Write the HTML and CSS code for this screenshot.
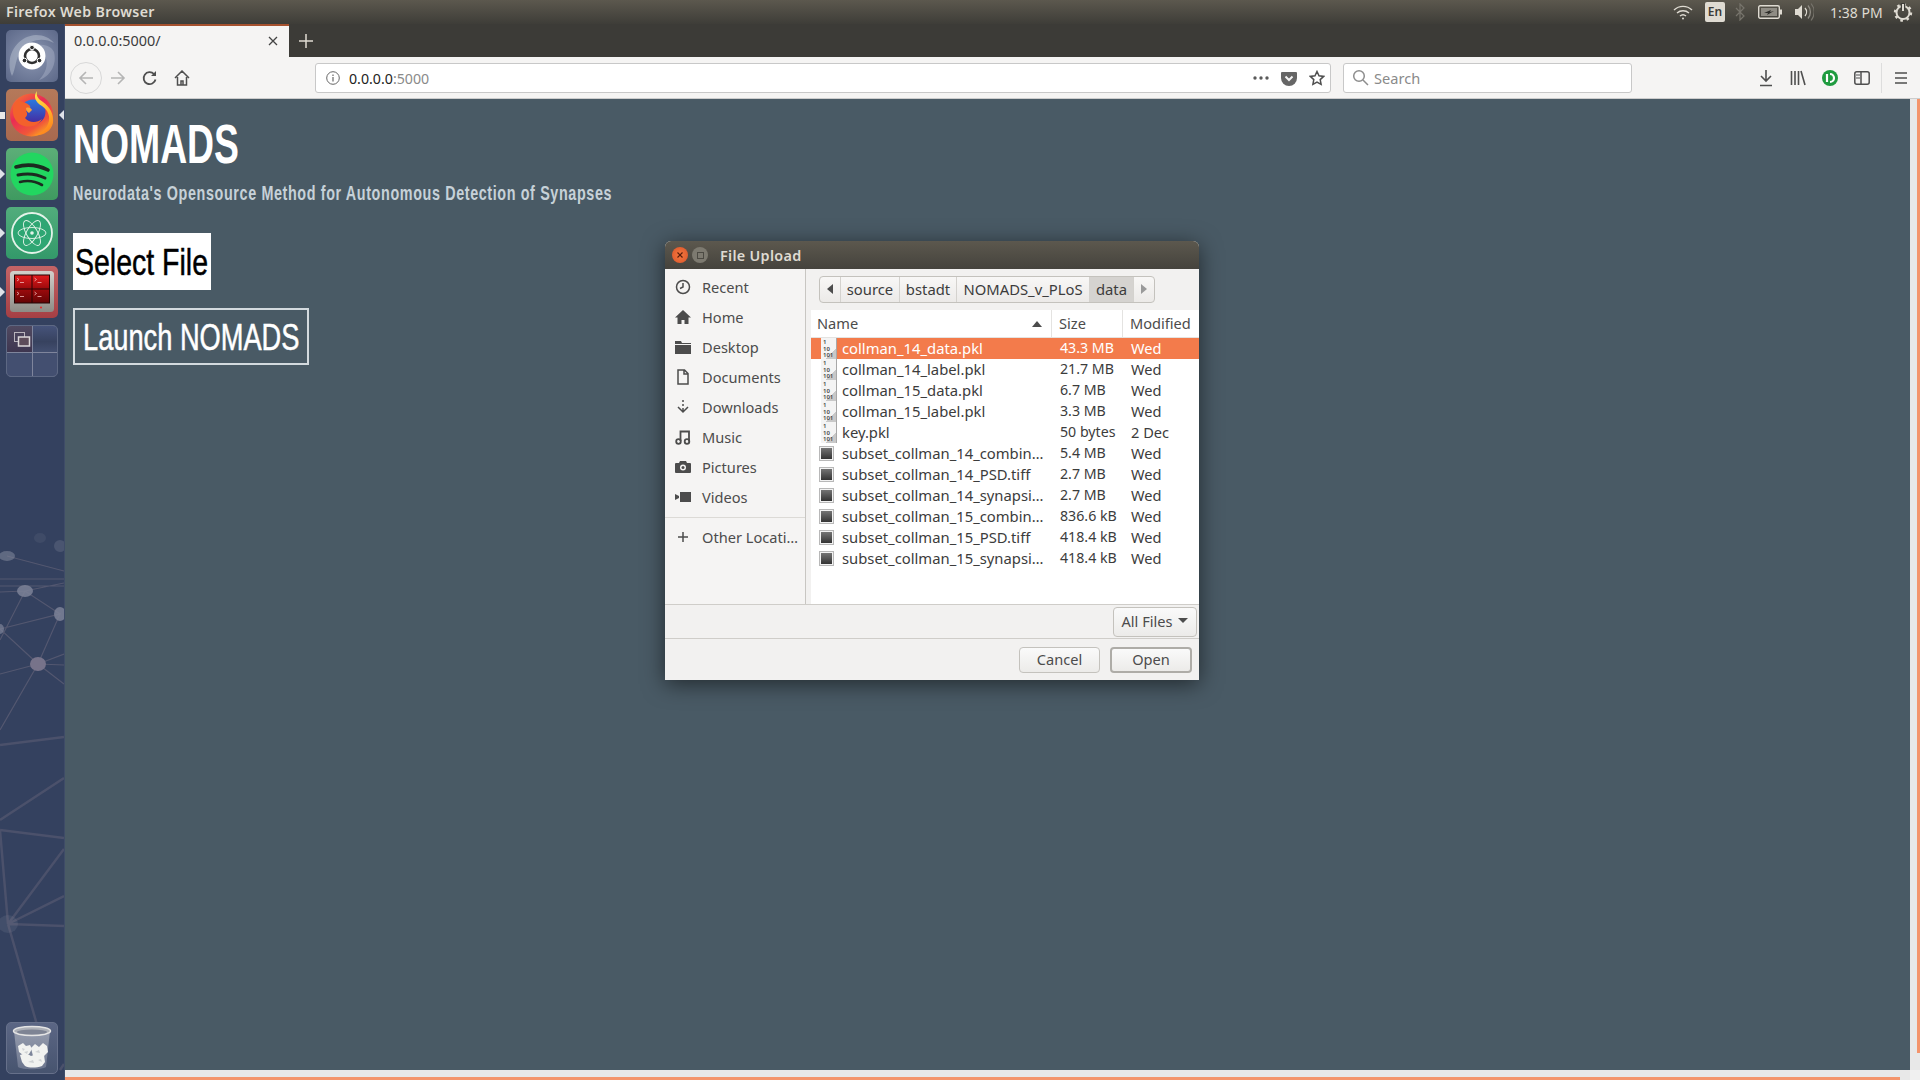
FILE: index.html
```html
<!DOCTYPE html>
<html lang="en">
<head>
    <meta charset="UTF-8">
    <title>Firefox Web Browser</title>
    <link rel="stylesheet" href="styles.css">
</head>
<body>
    <!-- Ubuntu top panel -->
    <div class="panel">
        <div class="panel-title">Firefox Web Browser</div>
        <div class="tray">
            <svg class="tray-wifi" width="20" height="16" viewBox="0 0 20 16" fill="none" stroke="#dfdbd2" stroke-width="1.4"><path d="M1 6a13 13 0 0 1 18 0"/><path d="M4 9a9 9 0 0 1 12 0"/><path d="M7 12a4.5 4.5 0 0 1 6 0"/><circle cx="10" cy="14.4" r="1" fill="#dfdbd2" stroke="none"/></svg>
            <div class="tray-lang">En</div>
            <svg class="tray-bt" width="10" height="18" viewBox="0 0 10 18" fill="none" stroke="#77746c" stroke-width="1.2"><path d="M1 5l8 8-4 4V1l4 4-8 8"/></svg>
            <svg class="tray-bat" width="24" height="14" viewBox="0 0 24 14"><rect x=".7" y=".7" width="20.6" height="12.6" rx="1.5" fill="none" stroke="#dfdbd2" stroke-width="1.4"/><rect x="3" y="3" width="16" height="8" fill="#8f8c84"/><path d="M6 8l7-3-1 2 4-1-7 4 1-2z" fill="#2f2e2a"/><rect x="22" y="4.5" width="2" height="5" fill="#dfdbd2"/></svg>
            <svg class="tray-vol" width="20" height="20" viewBox="0 0 20 20" fill="none"><path d="M1 7h3l4-4v14l-4-4H1z" fill="#dfdbd2"/><path d="M11 6a6 6 0 0 1 0 8" stroke="#dfdbd2" stroke-width="1.3"/><path d="M14 3.5a10 10 0 0 1 0 13" stroke="#8f8c84" stroke-width="1.3"/><path d="M17 1.5a13 13 0 0 1 0 17" stroke="#77746c" stroke-width="1.1"/></svg>
            <div class="tray-time">1:38 PM</div>
            <svg class="tray-power" width="20" height="20" viewBox="0 0 20 20" fill="none" stroke="#dfdbd2"><circle cx="10" cy="10.500" r="6.500" stroke-width="2"/><circle cx="10" cy="10.500" r="8" stroke-width="2.400" stroke-dasharray="2.600 3.680"/><path d="M10 1v7" stroke="#3e3d38" stroke-width="4.500"/><path d="M10 2v7" stroke-width="2"/></svg>
        </div>
    </div>

    <div class="desktop">
        <!-- Launcher -->
        <div class="launcher">
            <svg class="launcher-bg" width="64" height="1056" viewBox="0 24 64 1056" fill="none" stroke="#6d6a7e" stroke-opacity=".55">
                <g stroke-width="1.2">
                    <path d="M7 556l57 15M0 579h64M0 586h64M0 592l25-1 39-8M0 640L25 591l35 23M0 629l60-15-22 50M0 629l38 35M0 674l38-10 26-10M38 664l26 1M38 664l26 20M0 730l38-66"/>
                </g>
                <g stroke-width="2.500" stroke-opacity=".4">
                    <path d="M0 745l64-8M0 820l64-42M0 830l64 8M8 924l56-75M8 924l56-28M8 924l56 2M8 924l42 146M0 830l8 94M60 1070l4-6"/>
                </g>
                <g fill="#7d8398" stroke="none">
                    <ellipse cx="7" cy="556" rx="8" ry="5" fill-opacity=".6"/>
                    <ellipse cx="25" cy="591" rx="8" ry="6" fill-opacity=".85"/>
                    <ellipse cx="60" cy="614" rx="6" ry="7" fill-opacity=".85"/>
                    <ellipse cx="0" cy="629" rx="4" ry="5" fill-opacity=".7"/>
                    <ellipse cx="38" cy="664" rx="8" ry="7" fill="#77738a"/>
                    <ellipse cx="60" cy="546" rx="6" ry="6" fill-opacity=".3"/>
                    <ellipse cx="40" cy="538" rx="6" ry="5" fill-opacity=".15"/>
                    <ellipse cx="8" cy="924" rx="10" ry="9" fill-opacity=".2"/>
                </g>
            </svg>

            <div class="launcher-item tile-ubuntu">
                <svg width="52" height="52" viewBox="0 0 52 52" fill="none">
                    <path d="M6 46C-2 28 10 6 30 5c8 0 14 3 18 8-10-6-24-4-32 6-7 9-6 20-10 27z" fill="#c2c9d8" fill-opacity=".45"/>
                    <path d="M48 22c3 12-3 24-15 28 7-7 9-15 7-22-1-7-7-11-12-13 8-1 17 0 20 7z" fill="#b4bccf" fill-opacity=".4"/>
                    <circle cx="26" cy="26" r="13.500" fill="#fff"/>
                    <circle cx="26" cy="26" r="7" stroke="#2f2f2f" stroke-width="2.600"/>
                    <g fill="#2f2f2f" stroke="#fff" stroke-width="1"><circle cx="26" cy="17.500" r="2.300"/><circle cx="18.500" cy="30.500" r="2.300"/><circle cx="33.500" cy="30.500" r="2.300"/></g>
                </svg>
            </div>
            <div class="launcher-item tile-firefox active-app">
                <svg width="52" height="52" viewBox="0 0 52 52">
                    <defs>
                        <linearGradient id="ffOuter" x1="0" y1="0" x2=".7" y2="1"><stop offset="0" stop-color="#f9852a"/><stop offset=".45" stop-color="#e92c55"/><stop offset=".8" stop-color="#f0553a"/><stop offset="1" stop-color="#fba321"/></linearGradient>
                        <linearGradient id="ffFlame" x1="0" y1="0" x2=".3" y2="1"><stop offset="0" stop-color="#ffe64f"/><stop offset=".6" stop-color="#ffb52a"/><stop offset="1" stop-color="#ff8a1f"/></linearGradient>
                        <linearGradient id="ffGlobe" x1="0" y1="0" x2="0" y2="1"><stop offset="0" stop-color="#2a7ae0"/><stop offset="1" stop-color="#47259c"/></linearGradient>
                    </defs>
                    <circle cx="25.500" cy="26" r="21.500" fill="url(#ffOuter)"/>
                    <circle cx="27" cy="23" r="12.500" fill="url(#ffGlobe)"/>
                    <path d="M13 10c2 4 8 3 11 7 1 2-1 4-4 5 2 3 1 5-1 7 4 5 12 5 17 1-3 6-11 9-18 7-8-2-12-10-11-18 0-3 2-6 6-9z" fill="#f3612c"/>
                    <path d="M31 2c-1 5 1 8 6 11 7 5 11 12 10 21-2 9-11 13-19 12 6-1 12-5 14-11 3-7 0-14-6-18-7-4-9-10-5-15z" fill="url(#ffFlame)"/>
                    <path d="M20 19c3-1 5 0 6 2l-3 3c-2-1-3-3-3-5z" fill="#f9a13a"/>
                </svg>
            </div>
            <div class="launcher-item tile-spotify">
                <svg width="52" height="52" viewBox="0 0 52 52"><circle cx="26" cy="26" r="21.500" fill="#22d660"/><g fill="none" stroke="#1c2a20" stroke-linecap="round"><path d="M10 19c10-3 22-2 32 3" stroke-width="3.600"/><path d="M12 27c9-2 19-1 27 3" stroke-width="3"/><path d="M14 34c8-2 15-1 22 3" stroke-width="2.600"/></g></svg>
            </div>
            <div class="launcher-item tile-atom">
                <svg width="52" height="52" viewBox="0 0 52 52" fill="none" stroke="#e4f3e9"><circle cx="26" cy="26" r="20" fill="#2ea673" stroke-width="1.800"/><ellipse cx="26" cy="26" rx="14" ry="5.500" stroke-width=".9"/><ellipse cx="26" cy="26" rx="14" ry="5.500" transform="rotate(60 26 26)" stroke-width=".9"/><ellipse cx="26" cy="26" rx="14" ry="5.500" transform="rotate(120 26 26)" stroke-width=".9"/><circle cx="26" cy="26" r="1.800" fill="#e4f3e9" stroke="none"/></svg>
            </div>
            <div class="launcher-item tile-term">
                <svg width="52" height="52" viewBox="0 0 52 52">
                    <defs>
                        <linearGradient id="termBody" x1="0" y1="0" x2="0" y2="1"><stop offset="0" stop-color="#d2d0cb"/><stop offset="1" stop-color="#8d8b85"/></linearGradient>
                        <linearGradient id="termTop" x1="0" y1="0" x2="0" y2="1"><stop offset="0" stop-color="#e01a1c"/><stop offset="1" stop-color="#9c0a0c"/></linearGradient>
                        <linearGradient id="termLow" x1="0" y1="0" x2="0" y2="1"><stop offset="0" stop-color="#9c0a0c"/><stop offset="1" stop-color="#650405"/></linearGradient>
                    </defs>
                    <rect x="4" y="5" width="44" height="41" rx="3.500" fill="url(#termBody)"/>
                    <rect x="8" y="8.500" width="36" height="29" fill="#250404"/>
                    <rect x="9" y="9.500" width="16.500" height="13" fill="url(#termTop)"/>
                    <rect x="26.500" y="9.500" width="16.500" height="13" fill="url(#termTop)"/>
                    <rect x="9" y="23.500" width="16.500" height="13" fill="url(#termLow)"/>
                    <rect x="26.500" y="23.500" width="16.500" height="13" fill="url(#termLow)"/>
                    <g fill="none" stroke="#f0b8b8" stroke-width=".8">
                        <path d="M11 12l2 1.500-2 1.500M14 16.500h4M28.500 12l2 1.500-2 1.500M31.500 16.500h4M11 26l2 1.500-2 1.500M14 30.500h4M28.500 26l2 1.500-2 1.500M31.500 30.500h4"/>
                    </g>
                    <circle cx="35" cy="41.500" r="1.100" fill="#e03030"/>
                </svg>
            </div>
            <div class="launcher-item tile-workspace">
                <div class="ws-cell ws-on">
                    <svg width="18" height="16" viewBox="0 0 18 16" fill="none" stroke="#b9b4bc"><rect x="1.500" y=".5" width="10" height="9"/><rect x="5.500" y="5" width="11" height="9" fill="#5d4c5a" stroke="#dcd8da" stroke-width="1.500"/></svg>
                </div>
                <div class="ws-cell ws-top"></div>
                <div class="ws-cell"></div>
                <div class="ws-cell"></div>
            </div>

            <div class="launcher-item tile-trash">
                <svg width="50" height="50" viewBox="1 1 50 50">
                    <defs>
                        <linearGradient id="binGlass" x1="0" y1="0" x2="0" y2="1"><stop offset="0" stop-color="#a9aebb" stop-opacity=".75"/><stop offset="1" stop-color="#747d95" stop-opacity=".8"/></linearGradient>
                    </defs>
                    <path d="M8 9l4 36c4 3 24 3 28 0l4-36z" fill="url(#binGlass)"/>
                    <ellipse cx="26" cy="9" rx="18.500" ry="4.500" fill="#aeb1b8" stroke="#e4e4e4" stroke-width="1.500"/>
                    <ellipse cx="26" cy="10" rx="15" ry="2.500" fill="#7e8494"/>
                    <g fill="#f1f2f0">
                        <path d="M12 24l5-3 3 3 4-1 2 4-3 5-6 1-4-3z"/>
                        <path d="M25 26l4-4 4 3 4-4 4 3 1 6-4 4-6-1-5 1z"/>
                        <path d="M14 33l6-2 5 3 6-2 7 1 1 7-3 4c-6 2-13 2-17 0l-3-4z"/>
                    </g>
                    <g fill="#cfd2d4">
                        <path d="M18 30l4-1-1 3zM29 30l4-2 1 3zM22 40l5-2 1 3zM32 38l3-1 1 3zM16 26l3 1-2 2z"/>
                    </g>
                </svg>
            </div>
        </div>

        <!-- Firefox window -->
        <div class="browser">
            <div class="tabbar">
                <div class="tab">
                    <span class="tab-title">0.0.0.0:5000/</span>
                    <svg width="12" height="12" viewBox="0 0 12 12" stroke="#444" stroke-width="1.300"><path d="M2 2l8 8M10 2l-8 8"/></svg>
                </div>
                <svg class="new-tab" width="14" height="14" viewBox="0 0 14 14" stroke="#dfdbd2" stroke-width="1.500"><path d="M7 0v14M0 7h14"/></svg>
            </div>

            <div class="toolbar">
                <div class="nav-btn back-btn">
                    <svg width="16" height="16" viewBox="0 0 16 16" fill="none" stroke="#b5b5b5" stroke-width="1.600"><path d="M15 8H2M8 2L2 8l6 6"/></svg>
                </div>
                <div class="nav-btn">
                    <svg width="16" height="16" viewBox="0 0 16 16" fill="none" stroke="#b5b5b5" stroke-width="1.600"><path d="M1 8h13M8 2l6 6-6 6"/></svg>
                </div>
                <div class="nav-btn">
                    <svg width="16" height="16" viewBox="0 0 16 16" fill="none" stroke="#4f4f4f" stroke-width="1.800"><path d="M13.500 9.500A6 6 0 1 1 12 4"/><path d="M14 1v5H9" fill="#4f4f4f" stroke="none"/></svg>
                </div>
                <div class="nav-btn">
                    <svg width="16" height="16" viewBox="0 0 16 16" fill="none" stroke="#4f4f4f" stroke-width="1.500"><path d="M1 8l7-7 7 7M3.500 7v8h9V7M7 15v-4h2v4"/></svg>
                </div>

                <div class="urlbar">
                    <svg width="14" height="14" viewBox="0 0 14 14" fill="none" stroke="#666"><circle cx="7" cy="7" r="6.300"/><path d="M7 6v4.500M7 3.500v1.500" stroke-width="1.200"/></svg>
                    <span class="url-text">0.0.0.0<span class="url-port">:5000</span></span>
                    <svg class="url-dots" width="16" height="4" viewBox="0 0 16 4" fill="#5a5a5a"><circle cx="2" cy="2" r="1.700"/><circle cx="8" cy="2" r="1.700"/><circle cx="14" cy="2" r="1.700"/></svg>
                    <svg class="url-icon" width="16" height="16" viewBox="0 0 16 16"><path d="M1 2h14a1 1 0 0 1 1 1v5a8 8 0 0 1-16 0V3a1 1 0 0 1 1-1z" fill="#666"/><path d="M4.500 6.500L8 10l3.500-3.500" fill="none" stroke="#f5f5f5" stroke-width="2"/></svg>
                    <svg class="url-icon star-icon" width="16" height="16" viewBox="0 0 16 16" fill="none" stroke="#4f4f4f" stroke-width="1.500"><path d="M8 1.500l2 4.300 4.700.6-3.500 3.200.9 4.700L8 12l-4.100 2.300.9-4.700L1.300 6.400 6 5.800z"/></svg>
                </div>

                <div class="searchbar">
                    <svg width="17" height="17" viewBox="0 0 17 17" fill="none" stroke="#8d8d8d" stroke-width="1.500"><circle cx="7" cy="7" r="5.300"/><path d="M11 11l5 5"/></svg>
                    <span class="search-text">Search</span>
                </div>

                <div class="nav-btn tools-first">
                    <svg width="16" height="18" viewBox="0 0 16 18" fill="none" stroke="#4f4f4f" stroke-width="1.600"><path d="M8 1v11M3 7l5 5 5-5M2 16.500h12"/></svg>
                </div>
                <div class="nav-btn">
                    <svg width="16" height="16" viewBox="0 0 16 16" fill="none" stroke="#4f4f4f" stroke-width="1.600"><path d="M1.500 1v14M5 1v14M8.500 1v14M11 1l4 14"/></svg>
                </div>
                <div class="nav-btn">
                    <svg width="18" height="18" viewBox="0 0 18 18"><circle cx="9" cy="9" r="8" fill="#1f9b3f"/><path d="M6 5v8M9 5a4 4 0 0 1 0 8" fill="none" stroke="#fff" stroke-width="2.200"/></svg>
                </div>
                <div class="nav-btn">
                    <svg width="16" height="16" viewBox="0 0 16 16" fill="none" stroke="#4f4f4f" stroke-width="1.500"><rect x=".8" y="1.800" width="14.400" height="12.400" rx="2"/><path d="M7 2v12"/><path d="M2 5h4M2 8h4" stroke-width="1"/></svg>
                </div>
                <div class="tool-sep"></div>
                <div class="nav-btn">
                    <svg width="14" height="14" viewBox="0 0 14 14" stroke="#4f4f4f" stroke-width="1.700"><path d="M1 2h12M1 7h12M1 12h12"/></svg>
                </div>
            </div>

            <div class="viewport">
                <div class="page">
                    <h1 class="oswald-wrap"><span class="oswald title-text">NOMADS</span></h1>
                    <h3 class="oswald-wrap"><span class="oswald subtitle-text">Neurodata's Opensource Method for Autonomous Detection of Synapses</span></h3>
                    <div class="file-btn"><span class="oswald btn-text select-text">Select File</span></div>
                    <div class="launch-btn"><span class="oswald btn-text launch-text">Launch NOMADS</span></div>
                </div>
                <div class="vscroll"><div class="vthumb"></div></div>
            </div>
            <div class="hscroll">
                <div class="hthumb"></div>
                <div class="scroll-corner"></div>
            </div>
        </div>
    </div>

    <!-- GTK file dialog -->
    <div class="dialog">
        <div class="dialog-title">
            <div class="win-close"><svg width="8" height="8" viewBox="0 0 8 8" stroke="#5a1d0c" stroke-width="1.200"><path d="M1.500 1.500l5 5M6.500 1.500l-5 5"/></svg></div>
            <div class="win-max"><div class="win-max-box"></div></div>
            <span>File Upload</span>
        </div>
        <div class="dialog-main">
            <div class="places">
                <div class="place"><svg width="16" height="16" viewBox="0 0 16 16" fill="none" stroke="#4c4c4c" stroke-width="1.500"><circle cx="8" cy="8" r="6.500"/><path d="M8 4v4l-3 1.500"/></svg><span>Recent</span></div>
                <div class="place"><svg width="16" height="16" viewBox="0 0 16 16" fill="#4c4c4c"><path d="M8 1L0 8.500h2.500V15h4v-4h3v4h4V8.500H16z"/></svg><span>Home</span></div>
                <div class="place"><svg width="16" height="16" viewBox="0 0 16 16" fill="#4c4c4c"><path d="M0 2h6l1 2h9v1H0zM0 6h16v9H0z"/></svg><span>Desktop</span></div>
                <div class="place"><svg width="16" height="16" viewBox="0 0 16 16" fill="none" stroke="#4c4c4c" stroke-width="1.500"><path d="M3 1h6.500L13 4.500V15H3zM9 1v4h4"/></svg><span>Documents</span></div>
                <div class="place"><svg width="16" height="16" viewBox="0 0 16 16" fill="none" stroke="#4c4c4c" stroke-width="1.500"><path d="M8 1v2M8 5v2M8 9v3M3 8l5 5 5-5"/></svg><span>Downloads</span></div>
                <div class="place"><svg width="16" height="16" viewBox="0 0 16 16" fill="none" stroke="#4c4c4c" stroke-width="1.800"><circle cx="3.500" cy="12.500" r="2.300"/><circle cx="12" cy="12.500" r="2.300"/><path d="M5.500 12V2.500h8.500v10"/></svg><span>Music</span></div>
                <div class="place"><svg width="16" height="16" viewBox="0 0 16 16" fill="#4c4c4c"><path d="M5 2h6l1 2h3a1 1 0 0 1 1 1v8a1 1 0 0 1-1 1H1a1 1 0 0 1-1-1V5a1 1 0 0 1 1-1h3z"/><circle cx="8" cy="8.500" r="3" fill="#f5f4f3"/><circle cx="8" cy="8.500" r="1.500"/></svg><span>Pictures</span></div>
                <div class="place"><svg width="16" height="16" viewBox="0 0 16 16" fill="#4c4c4c"><path d="M5 3h11v10H5zM0 5l4 2v2l-4 2z"/></svg><span>Videos</span></div>
                <div class="places-sep"></div>
                <div class="place"><svg width="16" height="16" viewBox="0 0 16 16" stroke="#4c4c4c" stroke-width="1.500"><path d="M8 3v10M3 8h10"/></svg><span>Other Locati…</span></div>
            </div>
            <div class="chooser">
                <div class="pathbar">
                    <div class="crumb crumb-arrow"><svg width="6" height="10" viewBox="0 0 6 10" fill="#4c4c4c"><path d="M6 0v10L0 5z"/></svg></div>
                    <div class="crumb crumb-source">source</div>
                    <div class="crumb crumb-bstadt">bstadt</div>
                    <div class="crumb crumb-nomads">NOMADS_v_PLoS</div>
                    <div class="crumb crumb-data">data</div>
                    <div class="crumb crumb-next"><svg width="6" height="10" viewBox="0 0 6 10" fill="#9a9a9a"><path d="M0 0v10l6-5z"/></svg></div>
                </div>
                <div class="filelist">
                    <div class="list-head">
                        <div class="col-name">Name<svg class="sort-arrow" width="10" height="6" viewBox="0 0 10 6" fill="#4c4c4c"><path d="M5 0l5 6H0z"/></svg></div>
                        <div class="col-size">Size</div>
                        <div class="col-mod">Modified</div>
                    </div>
                    <div class="row selected"><div class="col-name"><div class="bin-icon">1<br>10<br>101</div>collman_14_data.pkl</div><div class="col-size">43.3 MB</div><div class="col-mod">Wed</div></div>
                    <div class="row"><div class="col-name"><div class="bin-icon">1<br>10<br>101</div>collman_14_label.pkl</div><div class="col-size">21.7 MB</div><div class="col-mod">Wed</div></div>
                    <div class="row"><div class="col-name"><div class="bin-icon">1<br>10<br>101</div>collman_15_data.pkl</div><div class="col-size">6.7 MB</div><div class="col-mod">Wed</div></div>
                    <div class="row"><div class="col-name"><div class="bin-icon">1<br>10<br>101</div>collman_15_label.pkl</div><div class="col-size">3.3 MB</div><div class="col-mod">Wed</div></div>
                    <div class="row"><div class="col-name"><div class="bin-icon">1<br>10<br>101</div>key.pkl</div><div class="col-size">50 bytes</div><div class="col-mod">2 Dec</div></div>
                    <div class="row"><div class="col-name"><div class="img-icon"></div>subset_collman_14_combin…</div><div class="col-size">5.4 MB</div><div class="col-mod">Wed</div></div>
                    <div class="row"><div class="col-name"><div class="img-icon"></div>subset_collman_14_PSD.tiff</div><div class="col-size">2.7 MB</div><div class="col-mod">Wed</div></div>
                    <div class="row"><div class="col-name"><div class="img-icon"></div>subset_collman_14_synapsi…</div><div class="col-size">2.7 MB</div><div class="col-mod">Wed</div></div>
                    <div class="row"><div class="col-name"><div class="img-icon"></div>subset_collman_15_combin…</div><div class="col-size">836.6 kB</div><div class="col-mod">Wed</div></div>
                    <div class="row"><div class="col-name"><div class="img-icon"></div>subset_collman_15_PSD.tiff</div><div class="col-size">418.4 kB</div><div class="col-mod">Wed</div></div>
                    <div class="row"><div class="col-name"><div class="img-icon"></div>subset_collman_15_synapsi…</div><div class="col-size">418.4 kB</div><div class="col-mod">Wed</div></div>
                </div>
            </div>
        </div>
        <div class="filter-bar">
            <div class="gtk-btn filter-btn">All Files<svg width="10" height="5" viewBox="0 0 10 5" fill="#4c4c4c"><path d="M0 0h10L5 5z"/></svg></div>
        </div>
        <div class="action-bar">
            <div class="gtk-btn cancel-btn">Cancel</div>
            <div class="gtk-btn open-btn">Open</div>
        </div>
    </div>
</body>
</html>
```

FILE: styles.css
```css
* {
    box-sizing: border-box;
}

html, body {
    margin: 0;
    height: 100%;
    overflow: hidden;
}

body {
    font-family: "Noto Sans", "Open Sans", sans-serif;
    font-size: 14.6px;
    color: #3c3c3c;
    display: flex;
    flex-direction: column;
    width: 1920px;
    height: 1080px;
    position: relative;
}

/* Top panel */
.panel {
    height: 24px;
    background: linear-gradient(#5c584e, #3e3d38);
    display: flex;
    align-items: center;
    justify-content: space-between;
    color: #dfdbd2;
    flex-shrink: 0;
}

.panel-title {
    padding: 0 0 1px 6px;
    font-weight: 600;
    font-size: 14.2px;
    letter-spacing: 0.35px;
}

.tray {
    display: flex;
    align-items: center;
    height: 24px;
}

.tray-wifi {
    margin-right: 12px;
}

.tray-lang {
    width: 20px;
    height: 20px;
    background: #dfdbd2;
    color: #3c3b37;
    border-radius: 2px;
    font-size: 12px;
    text-align: center;
    line-height: 20px;
    font-weight: 600;
    margin-right: 10px;
}

.tray-bt {
    margin-right: 13px;
}

.tray-bat {
    margin-right: 12px;
}

.tray-vol {
    margin-right: 16px;
}

.tray-time {
    width: 52px;
    font-size: 14px;
    margin-right: 11px;
    white-space: nowrap;
}

.tray-power {
    margin-right: 7px;
}

.desktop {
    flex: 1;
    display: flex;
    min-height: 0;
}

/* Launcher */
.launcher {
    width: 65px;
    flex-shrink: 0;
    background: #34415f;
    border-right: 1px solid #3f4c68;
    padding: 6px 0 6px 6px;
    display: flex;
    flex-direction: column;
    gap: 7px;
    position: relative;
    overflow: hidden;
}

.launcher-bg {
    position: absolute;
    left: 0;
    top: 0;
}

.launcher-item {
    width: 52px;
    height: 52px;
    border-radius: 5px;
    position: relative;
    flex-shrink: 0;
}

.tile-ubuntu {
    background: radial-gradient(circle at 50% 50%, #8c97b2, #5c6888);
}

.tile-firefox {
    background: linear-gradient(#b5795a, #a8694f);
}

.tile-firefox::before {
    content: "";
    position: absolute;
    left: -6px;
    top: 23px;
    width: 5px;
    height: 7px;
    background: #e8e8e8;
}

.tile-firefox::after {
    content: "";
    position: absolute;
    right: -6px;
    top: 21px;
    border: 5px solid transparent;
    border-left: 0;
    border-right: 5px solid #dfe2e8;
}

.tile-spotify {
    background: linear-gradient(#5cae78, #3f9a60);
}

.tile-spotify::before, .tile-atom::before, .tile-term::before {
    content: "";
    position: absolute;
    left: -6px;
    top: 21px;
    border: 5px solid transparent;
    border-right: 0;
    border-left: 5px solid #dfe2e8;
}

.tile-atom {
    background: linear-gradient(#52ad7c, #33996a);
}

.tile-term {
    background: linear-gradient(#c46466, #a53f44);
}

.tile-workspace {
    background: #7f859c;
    border: 1px solid #5d6883;
    display: grid;
    grid-template-columns: 1fr 1fr;
    grid-template-rows: 1fr 1fr;
    gap: 1px;
    overflow: hidden;
}

.ws-cell {
    background: #434f70;
    padding: 6px 0 0 6px;
}

.ws-top {
    background: linear-gradient(#46537a, #37425f 60%, #434f70);
}

.ws-on {
    background: linear-gradient(#504960, #3e3650);
}

.tile-trash {
    margin-top: auto;
    background: linear-gradient(#5b6684, #47546f);
    border: 1px solid #66708a;
}

/* Browser */
.browser {
    flex: 1;
    display: flex;
    flex-direction: column;
    min-width: 0;
}

.tabbar {
    height: 33px;
    background: #3c3b37;
    display: flex;
    align-items: center;
    flex-shrink: 0;
}

.tab {
    width: 224px;
    height: 33px;
    background: #f5f4f3;
    border-top: 2px solid #a5512e;
    display: flex;
    align-items: center;
    justify-content: space-between;
    padding: 0 10px 2px 9px;
    font-size: 14.4px;
}

.new-tab {
    margin-left: 10px;
}

.toolbar {
    height: 42px;
    background: #f5f4f3;
    border-bottom: 1px solid #cccccc;
    display: flex;
    align-items: center;
    padding-left: 5px;
    flex-shrink: 0;
}

.nav-btn {
    width: 32px;
    height: 32px;
    display: flex;
    align-items: center;
    justify-content: center;
    flex-shrink: 0;
}

.back-btn {
    border: 1px solid #d8d8d8;
    border-radius: 50%;
}

.urlbar, .searchbar {
    height: 30px;
    background: #ffffff;
    border: 1px solid #c8c8c8;
    border-radius: 3px;
    display: flex;
    align-items: center;
    flex-shrink: 0;
}

.urlbar {
    width: 1016px;
    margin-left: 117px;
    padding-left: 10px;
}

.url-text {
    margin-left: 9px;
    padding-top: 1px;
    color: #222222;
    flex: 1;
    font-size: 14.2px;
}

.url-port {
    color: #8a8a8a;
}

.url-dots {
    margin-right: 12px;
}

.url-icon {
    margin-right: 12px;
}

.star-icon {
    margin-right: 5px;
}

.searchbar {
    width: 289px;
    margin-left: 12px;
    padding-left: 8px;
    color: #8a8a8a;
    gap: 5px;
}

.search-text {
    padding-top: 1px;
}

.tools-first {
    margin-left: 118px;
}

.tool-sep {
    width: 1px;
    height: 30px;
    background: #dddddd;
    margin: 0 3px;
}

/* Page */
.viewport {
    flex: 1;
    display: flex;
    min-height: 0;
    background: #495a65;
}

.page {
    flex: 1;
    padding: 17px 0 0 8px;
    min-width: 0;
}

.oswald-wrap {
    margin: 0;
    font-weight: normal;
}

.oswald {
    font-family: "Liberation Sans", sans-serif;
    display: inline-block;
    transform-origin: left center;
    white-space: nowrap;
}

.title-text {
    font-size: 56px;
    line-height: 56px;
    font-weight: bold;
    color: #ffffff;
    transform: scaleX(0.667);
}

.subtitle-text {
    font-size: 21px;
    line-height: 28px;
    color: #c6d1d8;
    letter-spacing: 0.9px;
    font-weight: bold;
    transform: scaleX(0.684);
    margin-top: 7px;
}

.file-btn {
    width: 138px;
    height: 57px;
    background: #ffffff;
    color: #000000;
    margin-top: 26px;
    padding: 3px 0 0 2px;
    display: flex;
    align-items: center;
}

.launch-btn {
    width: 236px;
    height: 57px;
    border: 2px solid #d3dade;
    color: #ffffff;
    margin-top: 18px;
    padding: 3px 0 0 8px;
    display: flex;
    align-items: center;
}

.btn-text {
    font-size: 37px;
    line-height: 40px;
    -webkit-text-stroke: 0.5px currentColor;
}

.select-text {
    transform: scaleX(0.77);
}

.launch-text {
    transform: scaleX(0.736);
}

.vscroll {
    width: 10px;
    background: #e8e8e8;
    display: flex;
    justify-content: flex-end;
}

.vthumb {
    width: 3px;
    height: 954px;
    background: #f4946b;
}

.hscroll {
    height: 10px;
    background: #e8e8e8;
    position: relative;
    flex-shrink: 0;
    display: flex;
    align-items: flex-end;
    justify-content: space-between;
}

.hthumb {
    width: 1835px;
    height: 3px;
    background: #f4946b;
}

.scroll-corner {
    width: 10px;
    height: 10px;
    background: #f0f0f0;
}

/* GTK dialog, a floating window */
.dialog {
    position: absolute;
    left: 665px;
    top: 241px;
    width: 534px;
    height: 439px;
    background: #f2f1f0;
    border-radius: 6px 6px 0 0;
    box-shadow: 0 4px 22px rgba(0, 0, 0, 0.55);
    display: flex;
    flex-direction: column;
    overflow: hidden;
}

.dialog-title {
    height: 28px;
    background: linear-gradient(#5c584e, #45433d);
    color: #dfdbd2;
    font-weight: 600;
    font-size: 14.4px;
    display: flex;
    align-items: center;
    padding-left: 7px;
    letter-spacing: 0.3px;
    flex-shrink: 0;
}

.win-close, .win-max {
    width: 16px;
    height: 16px;
    border-radius: 50%;
    display: flex;
    align-items: center;
    justify-content: center;
}

.win-close {
    background: radial-gradient(#f5793f, #d9542a);
}

.win-max {
    background: #7d7a70;
    margin-left: 4px;
    margin-right: 12px;
}

.win-max-box {
    width: 7px;
    height: 7px;
    border: 1px solid #4c4a43;
}

.dialog-main {
    height: 335px;
    display: flex;
    flex-shrink: 0;
}

.places {
    width: 141px;
    background: #f5f4f3;
    border-right: 1px solid #c8c6c2;
    padding: 3px 0 0 10px;
    color: #4c4c4c;
    flex-shrink: 0;
}

.place {
    height: 30px;
    display: flex;
    align-items: center;
    gap: 11px;
    white-space: nowrap;
    font-size: 14.6px;
}

.places-sep {
    height: 1px;
    background: #dcdad6;
    margin: 5px 0 4px -10px;
}

.chooser {
    flex: 1;
    padding-left: 5px;
    display: flex;
    flex-direction: column;
    min-width: 0;
}

.pathbar {
    height: 27px;
    margin: 7px 0 7px 8px;
    width: 336px;
    display: flex;
    background: linear-gradient(#f8f7f6, #eceae8);
    border: 1px solid #c4c2bd;
    border-radius: 4px;
    overflow: hidden;
    font-size: 14.8px;
    flex-shrink: 0;
}

.crumb {
    display: flex;
    align-items: center;
    justify-content: center;
    border-right: 1px solid #d4d2ce;
    padding-bottom: 2px;
    white-space: nowrap;
}

.crumb-arrow {
    width: 21px;
}

.crumb-source {
    width: 59px;
}

.crumb-bstadt {
    width: 57px;
}

.crumb-nomads {
    width: 133px;
}

.crumb-data {
    width: 44px;
    background: #d5d3d0;
}

.crumb-next {
    flex: 1;
    border-right: 0;
}

.filelist {
    flex: 1;
    background: #ffffff;
}

.list-head {
    height: 28px;
    display: flex;
    align-items: center;
    border-bottom: 1px solid #e4e3e1;
    color: #4c4c4c;
}

.list-head .col-name {
    width: 241px;
    padding: 0 0 2px 6px;
    border-right: 1px solid #e4e3e1;
    height: 100%;
    position: relative;
}

.sort-arrow {
    position: absolute;
    right: 9px;
    top: 11px;
}

.list-head .col-size {
    border-right: 1px solid #e4e3e1;
    height: 100%;
}

.list-head .col-name, .list-head .col-size, .list-head .col-mod {
    display: flex;
    align-items: center;
    font-size: 14.6px;
}

.col-name {
    width: 241px;
    display: flex;
    align-items: center;
    flex-shrink: 0;
    white-space: nowrap;
    font-size: 14.8px;
}

.col-size {
    width: 71px;
    padding-left: 8px;
    flex-shrink: 0;
    white-space: nowrap;
    font-size: 14.2px;
}

.col-mod {
    padding-left: 8px;
    white-space: nowrap;
}

.list-head .col-size, .list-head .col-mod {
    padding: 0 0 2px 7px;
}

.row {
    height: 21px;
    padding-bottom: 2px;
    display: flex;
    align-items: center;
    color: #3c3c3c;
}

.row.selected {
    background: #f37b4b;
    color: #ffffff;
}

.bin-icon {
    width: 16px;
    height: 21px;
    margin: 2px 5px 0 10px;
    background: linear-gradient(135deg, #f4f4f4 70%, #c8c8c8 70%);
    border-right: 1px solid #a8a8a8;
    color: #444444;
    font-size: 6px;
    font-weight: 600;
    line-height: 6.500px;
    padding: 1px 0 0 2px;
    overflow: hidden;
    flex-shrink: 0;
    letter-spacing: 0;
}

.img-icon {
    width: 15px;
    height: 15px;
    margin: 1px 8px 0 8px;
    border: 1px solid #b8b8b8;
    background: linear-gradient(#7a7a7a, #2e2e2e);
    box-shadow: inset 0 0 0 1px #f2f2f2;
    flex-shrink: 0;
}

.filter-bar {
    height: 35px;
    border-top: 1px solid #cfcdc9;
    border-bottom: 1px solid #cfcdc9;
    display: flex;
    align-items: center;
    justify-content: flex-end;
    padding-right: 2px;
    flex-shrink: 0;
}

.gtk-btn {
    background: linear-gradient(#fafafa, #ecebe9);
    border: 1px solid #c4c2bd;
    border-radius: 4px;
    display: flex;
    align-items: center;
    justify-content: center;
    color: #4c4c4c;
    padding-bottom: 2px;
}

.filter-btn {
    width: 84px;
    height: 30px;
    gap: 6px;
}

.action-bar {
    flex: 1;
    display: flex;
    justify-content: flex-end;
    align-items: center;
    gap: 10px;
    padding: 0 7px 0 0;
}

.cancel-btn, .open-btn {
    width: 81px;
    height: 26px;
}

.open-btn {
    width: 82px;
    border: 2px solid #aeaca7;
}
```
